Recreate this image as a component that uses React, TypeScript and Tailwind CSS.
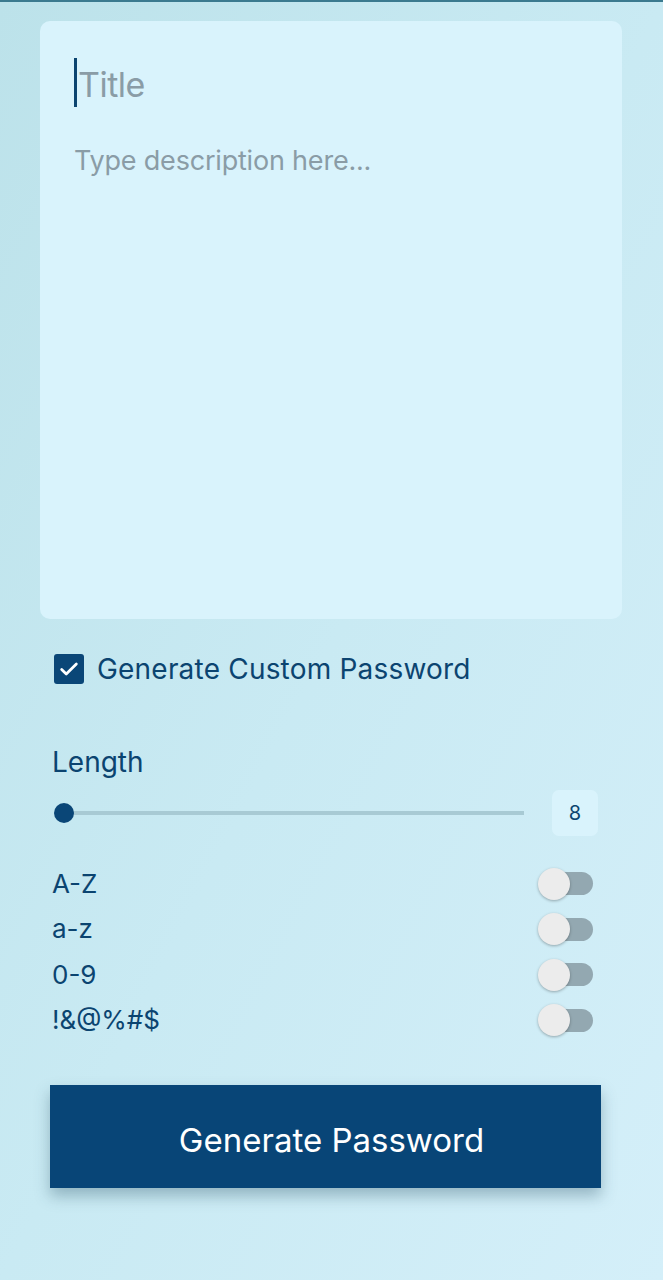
import { useState } from "react"

const options = ["A-Z", "a-z", "0-9", "!&@%#$"]

const Toggle = ({ on, onClick }: { on: boolean; onClick: () => void }) => (
  <button
    type="button"
    onClick={onClick}
    className="relative flex h-[32px] w-[55px] items-center"
  >
    <span className="ml-[1px] h-[23px] w-[54px] rounded-full bg-[#93a8b1]" />
    <span
      className={`absolute top-0 h-[32px] w-[32px] rounded-full bg-[#ececec] shadow-[0_1px_3px_rgba(0,0,0,0.3)] ${
        on ? "left-[22px]" : "left-0"
      }`}
    />
  </button>
)

const App: React.FC = () => {
  const [checked, setChecked] = useState(true)
  const [toggles, setToggles] = useState([false, false, false, false])

  return (
    <div
      className="min-h-[1280px] w-full border-t-[2px] border-[#3b7a8f] bg-gradient-to-br from-[#bce2ea] via-[#c9eaf3] to-[#d4eff9] text-[#0b4470]"
      style={{ fontFamily: "Inter, Roboto, sans-serif" }}
    >
      <div className="px-[40px] pt-[19px] pr-[41px]">
        <div className="h-[598px] rounded-[10px] bg-[#d9f3fc] px-[34px] pt-[35px]">
          <div className="flex items-center">
            <span className="h-[49px] w-[3px] bg-[#0b4470]" />
            <span className="mt-[4px] ml-[1px] text-[34px] leading-[49px] tracking-[-0.5px] text-[#8a9ca6]">
              Title
            </span>
          </div>
          <div className="mt-[37px] text-[27px] leading-[30px] tracking-[-0.2px] text-[#8a9ca6]">
            Type description here...
          </div>
        </div>
      </div>

      <div className="px-[52px]">
        <label className="mt-[33px] flex items-center">
          <button
            type="button"
            onClick={() => setChecked(!checked)}
            className="ml-[2px] flex h-[30px] w-[30px] items-center justify-center rounded-[3px] bg-[#0a4677]"
          >
            {checked && (
              <svg width="22" height="22" viewBox="0 0 24 24" fill="none">
                <path
                  d="M4 12.5l5 5L20 6.5"
                  stroke="#fff"
                  strokeWidth="3"
                  strokeLinecap="round"
                  strokeLinejoin="round"
                />
              </svg>
            )}
          </button>
          <span className="ml-[13px] text-[28px] leading-[34px] tracking-[0.2px]">
            Generate Custom Password
          </span>
        </label>

        <div className="mt-[60px] text-[28px] leading-[32px]">Length</div>

        <div className="mt-[12px] flex items-center">
          <div className="relative flex h-[46px] flex-1 items-center">
            <div className="ml-[12px] h-[4px] w-[460px] bg-[#a8cad4]" />
            <div className="absolute left-[2px] top-[13px] h-[20px] w-[20px] rounded-full bg-[#0a4677]" />
          </div>
          <div className="ml-[27px] flex h-[46px] w-[46px] items-center justify-center rounded-[7px] bg-[#d9f3fc] text-[20px]">
            8
          </div>
          <div className="w-[13px]" />
        </div>

        <div className="mt-[25px] flex flex-col">
          {options.map((opt, i) => (
            <div
              key={opt}
              className="flex h-[45.5px] items-center justify-between pr-[18px]"
            >
              <span className="text-[26px] leading-[32px]">{opt}</span>
              <Toggle
                on={toggles[i]}
                onClick={() =>
                  setToggles(toggles.map((t, j) => (j === i ? !t : t)))
                }
              />
            </div>
          ))}
        </div>
      </div>

      <div className="mt-[42px] pl-[50px] pr-[62px]">
        <button
          type="button"
          className="h-[103px] w-full bg-[#084577] pt-[9px] pl-[12px] text-[33px] text-white shadow-[0_8px_14px_rgba(40,80,100,0.35)]"
        >
          Generate Password
        </button>
      </div>
    </div>
  )
}

export default App
